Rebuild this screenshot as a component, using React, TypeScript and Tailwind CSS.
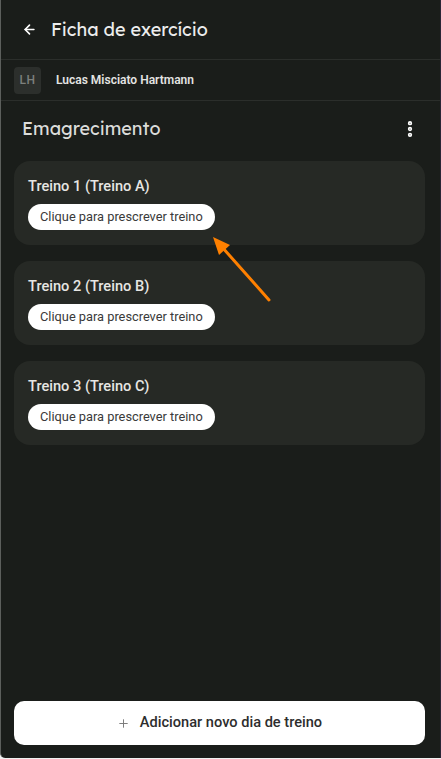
import { ArrowLeft, EllipsisVertical, Plus } from 'lucide-react';

const TREINOS = [
  { id: 1, name: 'Treino 1 (Treino A)' },
  { id: 2, name: 'Treino 2 (Treino B)' },
  { id: 3, name: 'Treino 3 (Treino C)' },
];

const SANS = { fontFamily: 'Roboto, "Liberation Sans", sans-serif' };
const DISPLAY = { fontFamily: 'Lexend, Inter, "Noto Sans", sans-serif' };

function TreinoCard({ name }: { name: string }) {
  return (
    <div className="rounded-[16px] bg-[#262925] px-[14px] pt-[16px] pb-[15px]">
      <h3 className="text-[14.6px] leading-[18px] font-medium text-[#e6e6e3]">{name}</h3>
      <button className="mt-[9px] h-[26px] rounded-[13px] bg-white px-[12px] text-[12.8px] text-[#3a3a3a]">
        Clique para prescrever treino
      </button>
    </div>
  );
}

export default function App() {
  return (
    <div className="w-[441px] h-[759px] bg-[#f1f1f1]" style={SANS}>
      <div className="relative flex h-[758px] flex-col rounded-bl-[5px] border-l border-r border-l-[#5c5f5c] border-r-[#2a2535] bg-[#1a1d1a]">
        <header className="flex h-[60px] items-center gap-[14px] border-b border-[#2b2e2b] pl-[21px]">
          <ArrowLeft size={15} strokeWidth={2.6} className="text-white" />
          <h1 className="text-[18px] text-[#ececec]" style={DISPLAY}>Ficha de exercício</h1>
        </header>

        <div className="flex h-[41px] items-center gap-[15px] border-b border-[#2b2e2b] pl-[13px]">
          <div className="flex h-[27px] w-[27px] items-center justify-center rounded-[4px] bg-[#2c2f2c] text-[12px] font-medium tracking-[0.5px] text-[#7d807d]">
            LH
          </div>
          <span className="text-[12px] font-semibold text-[#e4e4e2]">Lucas Misciato Hartmann</span>
        </div>

        <div className="flex items-center justify-between pl-[21px] pr-[20px] pt-[15px] pb-[19px]">
          <h2 className="text-[18px] leading-[26px] text-[#dcdcda]" style={DISPLAY}>Emagrecimento</h2>
          <EllipsisVertical size={20} strokeWidth={3.2} className="text-white" />
        </div>

        <main className="flex flex-1 flex-col gap-[16px] pl-[13px] pr-[15px]">
          {TREINOS.map((t) => (
            <TreinoCard key={t.id} name={t.name} />
          ))}
        </main>

        <div className="pl-[13px] pr-[15px] pb-[13px]">
          <button className="flex h-[44px] w-full items-center justify-center gap-[10px] rounded-[10px] bg-white text-[14.6px] font-medium text-[#2d2d2d]">
            <Plus size={13} strokeWidth={1.8} className="text-[#7a7a7a]" />
            Adicionar novo dia de treino
          </button>
        </div>

        {/* annotation arrow */}
        <svg className="pointer-events-none absolute left-[205px] top-[232px]" width="70" height="75" viewBox="0 0 70 75">
          <line x1="63" y1="68" x2="16" y2="15" stroke="#ff8000" strokeWidth="3" strokeLinecap="round" />
          <polygon points="7,5 24,13 13,23" fill="#ff8000" />
        </svg>
      </div>
    </div>
  );
}
